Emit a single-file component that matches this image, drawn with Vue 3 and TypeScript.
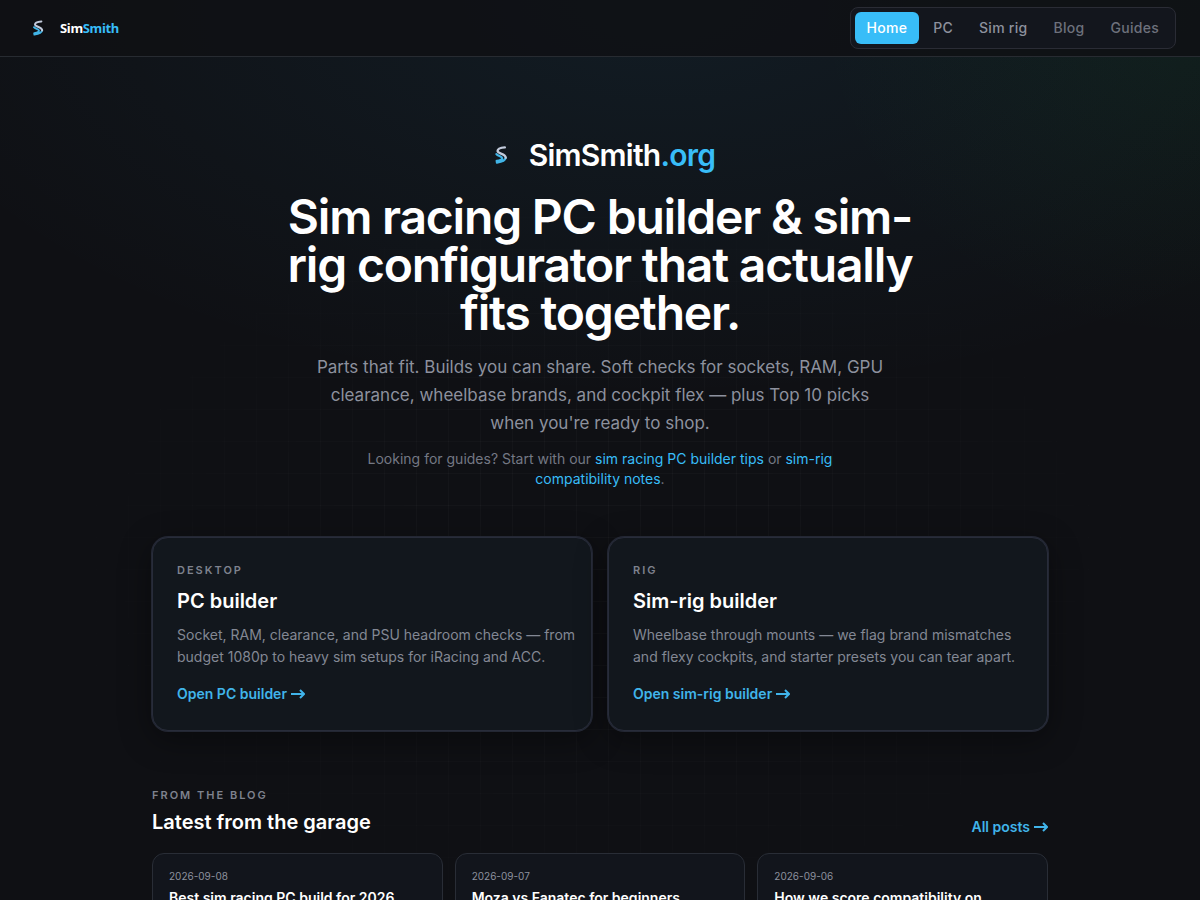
<script setup lang="ts">
interface NavItem { label: string; href: string; state: 'active' | 'normal' | 'muted' }
interface Builder { kicker: string; title: string; text: string; cta: string; href: string }
interface Post { date: string; title: string; href: string }

const nav: NavItem[] = [
  { label: 'Home', href: '#home', state: 'active' },
  { label: 'PC', href: '#pc', state: 'normal' },
  { label: 'Sim rig', href: '#rig', state: 'normal' },
  { label: 'Blog', href: '#blog', state: 'muted' },
  { label: 'Guides', href: '#guides', state: 'muted' },
]

const builders: Builder[] = [
  {
    kicker: 'Desktop',
    title: 'PC builder',
    text: 'Socket, RAM, clearance, and PSU headroom checks — from budget 1080p to heavy sim setups for iRacing and ACC.',
    cta: 'Open PC builder',
    href: '#pc',
  },
  {
    kicker: 'Rig',
    title: 'Sim-rig builder',
    text: 'Wheelbase through mounts — we flag brand mismatches and flexy cockpits, and starter presets you can tear apart.',
    cta: 'Open sim-rig builder',
    href: '#rig',
  },
]

const posts: Post[] = [
  { date: '2026-09-08', title: 'Best sim racing PC build for 2026', href: '#post-1' },
  { date: '2026-09-07', title: 'Moza vs Fanatec for beginners', href: '#post-2' },
  { date: '2026-09-06', title: 'How we score compatibility on', href: '#post-3' },
]
</script>

<template>
  <div class="page">
    <header class="topbar">
      <a class="brand" href="#home">
        <svg class="brand-mark" viewBox="0 0 28 28" aria-hidden="true">
          <path class="mark-bottom" d="M10 13.2C11.4 15 15 15 15 16.8C15 18.4 12.4 18.8 10.2 19.2M18 16.6C17.6 19 14 20 10.4 20.6" />
          <path class="mark-top" d="M17.4 7.4C14.2 7.6 11 8.6 11 10.6C11 13 18 12.6 18.2 16.4" />
        </svg>
        <span class="brand-name">Sim<span class="accent">Smith</span></span>
      </a>
      <nav class="nav" aria-label="Main">
        <a v-for="item in nav" :key="item.label" :href="item.href" :class="['nav-link', item.state]">{{ item.label }}</a>
      </nav>
    </header>

    <main class="main">
      <section class="hero">
        <div class="hero-brand">
          <svg class="hero-mark" viewBox="0 0 28 28" aria-hidden="true">
            <path class="mark-bottom" d="M10 13.2C11.4 15 15 15 15 16.8C15 18.4 12.4 18.8 10.2 19.2M18 16.6C17.6 19 14 20 10.4 20.6" />
            <path class="mark-top" d="M17.4 7.4C14.2 7.6 11 8.6 11 10.6C11 13 18 12.6 18.2 16.4" />
          </svg>
          <span>SimSmith<span class="accent">.org</span></span>
        </div>
        <h1>Sim racing PC builder &amp; sim-<br>rig configurator that actually<br>fits together.</h1>
        <p class="lead">Parts that fit. Builds you can share. Soft checks for sockets, RAM, GPU<br>clearance, wheelbase brands, and cockpit flex — plus Top 10 picks<br>when you're ready to shop.</p>
        <p class="hint">Looking for guides? Start with our <a href="#tips">sim racing PC builder tips</a> or <a href="#notes">sim-rig<br>compatibility notes</a>.</p>
      </section>

      <section class="builders">
        <article v-for="b in builders" :key="b.title" class="builder">
          <p class="kicker">{{ b.kicker }}</p>
          <h2>{{ b.title }}</h2>
          <p class="text">{{ b.text }}</p>
          <a class="cta" :href="b.href">{{ b.cta }}
            <svg class="arrow" viewBox="0 0 14 10" aria-hidden="true"><path d="M0 5H13M9 1L13 5L9 9" /></svg>
          </a>
        </article>
      </section>

      <section class="blog">
        <div class="blog-head">
          <div>
            <p class="kicker">From the blog</p>
            <h2>Latest from the garage</h2>
          </div>
          <a class="cta" href="#blog">All posts
            <svg class="arrow" viewBox="0 0 14 10" aria-hidden="true"><path d="M0 5H13M9 1L13 5L9 9" /></svg>
          </a>
        </div>
        <div class="posts">
          <a v-for="p in posts" :key="p.date" class="post" :href="p.href">
            <time :datetime="p.date">{{ p.date }}</time>
            <h3>{{ p.title }}</h3>
          </a>
        </div>
      </section>
    </main>
  </div>
</template>

<style>
body {
  margin: 0;
  background: #0f1014;
}
</style>

<style scoped>
.page {
  min-height: 100vh;
  font-family: Inter, "Liberation Sans", sans-serif;
  color: #fff;
  background:
    radial-gradient(ellipse 32% 340px at 100% 0, rgba(34, 197, 94, 0.07), transparent),
    radial-gradient(ellipse 800px 400px at 55% 0, rgba(56, 189, 248, 0.07), transparent),
    #0f1014;
}
a { color: inherit; text-decoration: none; }
h1, h2, h3, p { margin: 0; }
.accent { color: #38bdf8; }

.topbar {
  display: flex;
  align-items: center;
  justify-content: space-between;
  height: 56px;
  padding: 0 24px;
  border-bottom: 1px solid #272b31;
  background: rgba(15, 16, 20, 0.85);
}
.brand { display: flex; align-items: center; gap: 8px; }
.brand-mark { width: 28px; height: 28px; }
.brand-name {
  font: 700 13px/20px "Noto Sans", sans-serif;
  letter-spacing: -0.025em;
}
.mark-top, .mark-bottom {
  fill: none;
  stroke-width: 2;
  stroke-linecap: round;
  stroke-linejoin: round;
}
.mark-top { stroke: #c3cbdc; }
.mark-bottom { stroke: #41b4e6; }
.nav {
  display: flex;
  gap: 2px;
  padding: 4px;
  border: 1px solid #2a2c35;
  border-radius: 8px;
  background: #13161d;
}
.nav-link {
  padding: 6px 12px;
  border-radius: 6px;
  font-size: 14px;
  line-height: 20px;
  font-weight: 500;
  letter-spacing: 0.02em;
  color: #8d919d;
}
.nav-link.active { background: #38bdf8; color: #fff; }
.nav-link.muted { color: #6d717c; }

.main {
  padding: 80px 24px;
  position: relative;
}
.main::before {
  content: "";
  position: absolute;
  inset: 0;
  background-image:
    linear-gradient(to right, rgba(255, 255, 255, 0.022) 1px, transparent 1px),
    linear-gradient(to bottom, rgba(255, 255, 255, 0.022) 1px, transparent 1px);
  background-size: 32px 32px;
  -webkit-mask-image: radial-gradient(ellipse 580px 420px at 50% 500px, #000 30%, transparent);
  mask-image: radial-gradient(ellipse 580px 420px at 50% 500px, #000 30%, transparent);
}
.hero, .builders, .blog {
  position: relative;
  max-width: 896px;
  margin: 0 auto;
}
.hero { text-align: center; }
.hero-brand {
  display: flex;
  align-items: center;
  justify-content: center;
  gap: 12px;
  font-size: 30px;
  line-height: 36px;
  font-weight: 600;
  letter-spacing: -0.025em;
}
.hero-mark { width: 32px; height: 32px; }
h1 {
  margin-top: 20px;
  font-size: 48px;
  line-height: 48px;
  font-weight: 600;
  letter-spacing: -0.025em;
}
.lead {
  margin-top: 16px;
  font-size: 17px;
  line-height: 28px;
  color: #8d919e;
}
.hint {
  margin-top: 12px;
  font-size: 14px;
  line-height: 20px;
  color: #747884;
}
.hint a { color: #38bdf8; }

.builders {
  display: grid;
  grid-template-columns: 1fr 1fr;
  gap: 16px;
  margin-top: 48px;
}
.builder {
  padding: 24px 12px 24px 24px;
  border: 1px solid #282c3a;
  border-radius: 16px;
  background: #12171d;
  box-shadow: 0 0 0 1px #232733, 0 8px 32px rgba(0, 0, 0, 0.4);
}
.kicker {
  font-size: 11px;
  line-height: 16px;
  font-weight: 600;
  letter-spacing: 2px;
  text-transform: uppercase;
  color: #7e828e;
}
h2 {
  font-size: 20px;
  line-height: 30px;
  font-weight: 600;
}
.builder h2 { margin-top: 8px; }
.text {
  margin-top: 8px;
  font-size: 14px;
  line-height: 22px;
  color: #838894;
}
.cta {
  display: inline-flex;
  align-items: center;
  gap: 4px;
  font-size: 14px;
  line-height: 20px;
  font-weight: 600;
  color: #40b4ea;
}
.builder .cta {
  display: flex;
  width: fit-content;
  margin-top: 14px;
  line-height: 24px;
}
.arrow {
  width: 14px;
  height: 10px;
  fill: none;
  stroke: currentColor;
  stroke-width: 2;
}
.blog { margin-top: 56px; }
.blog-head {
  display: flex;
  align-items: flex-end;
  justify-content: space-between;
}
.blog-head h2 { margin-top: 4px; }
.posts {
  display: grid;
  grid-template-columns: repeat(3, 1fr);
  gap: 12px;
  margin-top: 16px;
}
.post {
  padding: 14px 16px;
  border: 1px solid #292d36;
  border-radius: 12px;
  background: #12151c;
}
.post time {
  display: block;
  font-size: 10px;
  line-height: 16px;
  color: #8d919e;
}
.post h3 {
  margin-top: 4px;
  font-size: 14px;
  line-height: 20px;
  font-weight: 600;
}
</style>
